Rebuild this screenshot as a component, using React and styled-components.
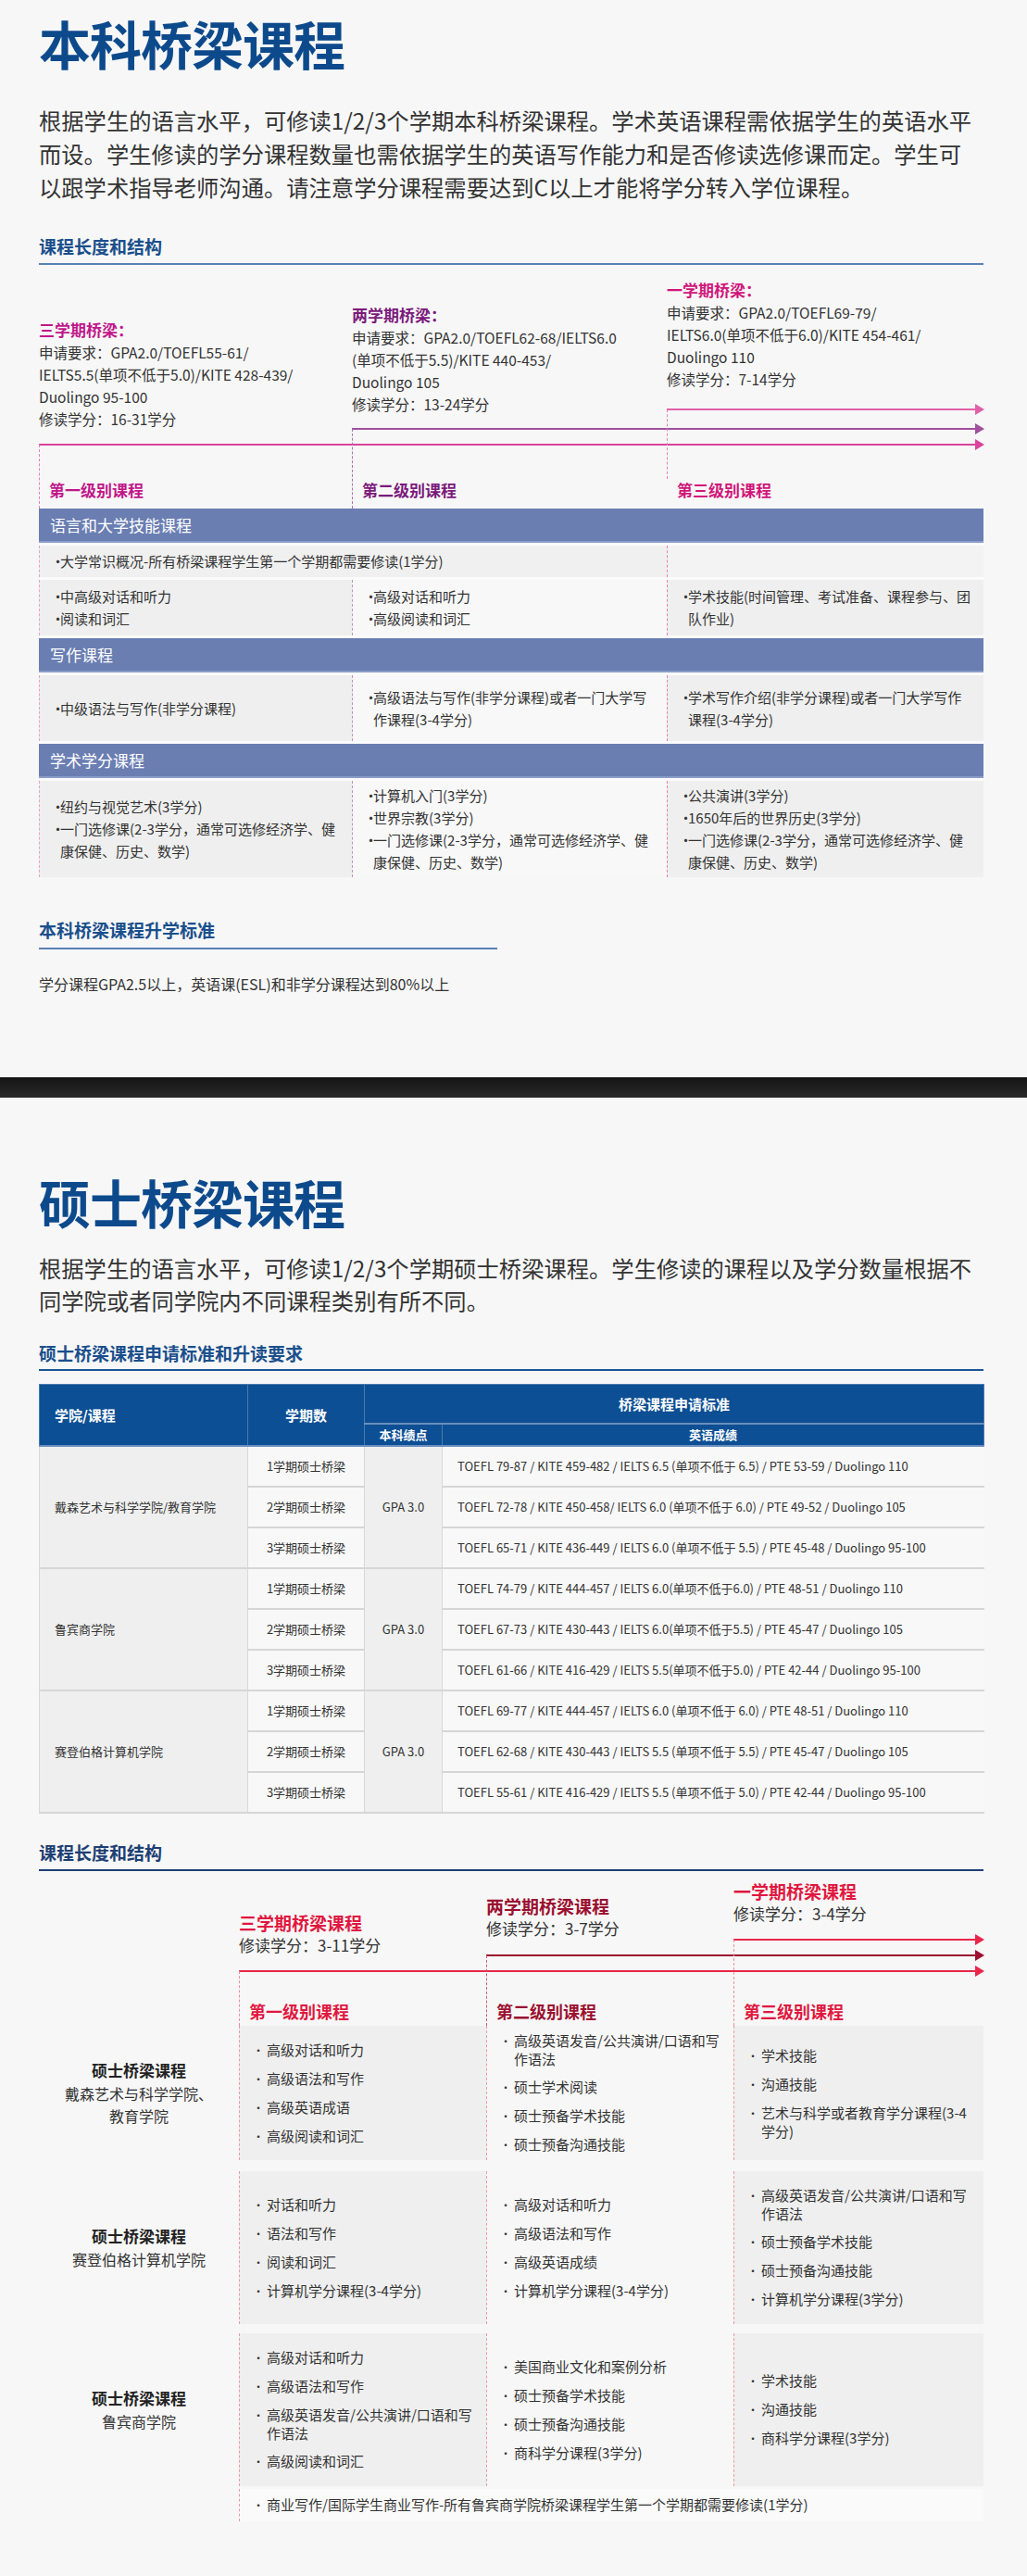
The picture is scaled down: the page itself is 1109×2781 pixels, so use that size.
import React from "react";
import styled, { createGlobalStyle } from "styled-components";

const Global = createGlobalStyle`
  body { margin: 0; background: #f7f7f7; font-family: "Noto Sans CJK SC", "Noto Sans", sans-serif; color: #2b2b2b; }
  * { box-sizing: border-box; }
`;

const Section = styled.section`
  padding: ${p => p.$pt || 0}px 47px 0 42px;
`;
const Title = styled.h1`
  margin: 0; font-size: 56px; line-height: 64px; font-weight: 700; color: #0d4a8c; letter-spacing: -1px;
`;
const Para = styled.p`
  margin: ${p => p.$mt}px 0 0; font-size: 24.3px; line-height: ${p => p.$lh || 36}px; color: #333;
`;
const SubHead = styled.h2`
  margin: ${p => p.$mt}px 0 0; font-size: 19px; line-height: 26px; font-weight: 700; color: ${p => p.$c || "#1a4f8c"};
  padding-bottom: ${p => p.$pb || 6}px; border-bottom: 2px solid ${p => p.$line || "#5b7fb5"};
  width: ${p => p.$w || "100%"};
`;
const DarkBar = styled.div`
  margin-top: 89px; height: 22px; background: linear-gradient(#141414, #2a2a2a);
`;

/* Timeline diagram */
const Timeline = styled.div`position: relative;`;
const StageGrid = styled.div`
  display: grid; grid-template-columns: ${p => p.$cols}; height: ${p => p.$h}px;
`;
const Stage = styled.div`padding-top: ${p => p.$top}px;`;
const StageHead = styled.div`
  font-size: ${p => p.$fs}px; line-height: ${p => p.$lh}px; font-weight: 700; color: ${p => p.$c};
`;
const StageLine = styled.div`font-size: ${p => p.$fs}px; line-height: ${p => p.$lh}px; color: #333;`;
const Arrow = styled.div`
  position: absolute; right: 8px; height: 2px; background: ${p => p.$c};
  &::after { content: ""; position: absolute; right: -9px; top: -5px;
    border-left: 10px solid ${p => p.$c}; border-top: 6px solid transparent; border-bottom: 6px solid transparent; }
`;
const VDash = styled.div`
  position: absolute; bottom: 0; width: 0; border-left: 1px dashed ${p => p.$c};
`;
const LevelRow = styled.div`display: grid; grid-template-columns: ${p => p.$cols}; padding: ${p => p.$pad};`;
const LevelHead = styled.div`
  font-size: ${p => p.$fs}px; line-height: 24px; font-weight: 700; color: ${p => p.$c}; padding-left: 11px;
`;

/* Undergrad grid */
const UGrid = styled.div`
  display: grid; grid-template-columns: 338px 340px 342px; row-gap: 3px; background: #fbfbfb;
`;
const Band = styled.div`
  grid-column: 1 / -1; height: 37px; background: #6a7eb2; color: #fff; font-size: 17px;
  display: flex; align-items: center; padding-left: 12px; border-bottom: 2px solid #8a9cc8;
`;
const UCell = styled.div`
  grid-column: span ${p => p.$span || 1}; min-height: ${p => p.$h}px; background: ${p => p.$bg};
  border-left: 1px dashed ${p => p.$dash || "transparent"};
  display: flex; flex-direction: column; justify-content: center; padding: 4px 12px;
  font-size: 15px; line-height: 24px; color: #333;
`;
const Bul = styled.div`
  padding-left: 10px; text-indent: -10px;
  &::before { content: "•"; display: inline-block; width: 10px; text-indent: 0; }
`;
const Note = styled.p`margin: 25px 0 0; font-size: 16px; line-height: 24px; color: #333;`;

/* Masters table */
const Table = styled.table`
  margin-top: 14px; width: 1020px; border-collapse: collapse; table-layout: fixed; font-size: 13px; color: #333;
`;
const Th = styled.th`
  background: #0d4f94; color: #fff; font-weight: 700; font-size: ${p => p.$fs || 15}px;
  height: ${p => p.$h}px; text-align: ${p => p.$al || "center"}; padding: 0 0 0 ${p => p.$pl || 0}px;
  border: 1px solid #4a7ab0; border-bottom: 2px solid #6b8fbd;
`;
const Td = styled.td`
  height: 44px; background: ${p => p.$bg || "#f8f8f8"}; text-align: ${p => p.$al || "left"};
  padding: 0 ${p => p.$pl || 0}px; border-left: 1px solid #d8d8d8; border-bottom: 2px solid #d6d6d6;
  white-space: nowrap;
`;

/* Masters structure grid */
const MGrid = styled.div`
  display: grid; grid-template-columns: 216px 267px 267px 270px;
`;
const MLabel = styled.div`
  display: flex; flex-direction: column; align-items: center; justify-content: center; text-align: center;
  min-height: ${p => p.$h}px; font-size: 16px; line-height: 24px; color: #333; padding: 0 8px;
  margin-bottom: ${p => p.$mb}px;
`;
const MName = styled.div`font-weight: 700; font-size: 17px; line-height: 26px; color: #222;`;
const MCell = styled.div`
  grid-column: span ${p => p.$span || 1}; min-height: ${p => p.$h}px; margin-bottom: ${p => p.$mb}px;
  background: ${p => p.$bg}; border-left: 1px dashed #e89aa5;
  display: flex; flex-direction: column; justify-content: center; gap: 11px; padding: 6px 14px 6px 14px;
  font-size: 15px; line-height: 19px; color: #333;
`;
const MBul = styled.div`
  padding-left: 15px; text-indent: -15px;
  &::before { content: "•"; display: inline-block; width: 15px; text-indent: 0; font-size: 12px; }
`;
const Bottom = styled.div`height: 60px;`;

const ug = [
  { t: "三学期桥梁：", c: "#c0168a", top: 58, lines: ["申请要求：GPA2.0/TOEFL55-61/", "IELTS5.5(单项不低于5.0)/KITE 428-439/", "Duolingo 95-100", "修读学分：16-31学分"] },
  { t: "两学期桥梁：", c: "#7b1a7b", top: 42, lines: ["申请要求：GPA2.0/TOEFL62-68/IELTS6.0", "(单项不低于5.5)/KITE 440-453/", "Duolingo 105", "修读学分：13-24学分"] },
  { t: "一学期桥梁：", c: "#d0157a", top: 15, lines: ["申请要求：GPA2.0/TOEFL69-79/", "IELTS6.0(单项不低于6.0)/KITE 454-461/", "Duolingo 110", "修读学分：7-14学分"] },
];

const tableRows = [
  { school: "戴森艺术与科学学院/教育学院", rows: [
    "TOEFL 79-87 / KITE 459-482 / IELTS 6.5 (单项不低于 6.5) / PTE 53-59 / Duolingo 110",
    "TOEFL 72-78 / KITE 450-458/ IELTS 6.0 (单项不低于 6.0) / PTE 49-52 / Duolingo 105",
    "TOEFL 65-71 / KITE 436-449 / IELTS 6.0 (单项不低于 5.5) / PTE 45-48 / Duolingo 95-100"] },
  { school: "鲁宾商学院", rows: [
    "TOEFL 74-79 / KITE 444-457 / IELTS 6.0(单项不低于6.0) / PTE 48-51 / Duolingo 110",
    "TOEFL 67-73 / KITE 430-443 / IELTS 6.0(单项不低于5.5) / PTE 45-47 / Duolingo 105",
    "TOEFL 61-66 / KITE 416-429 / IELTS 5.5(单项不低于5.0) / PTE 42-44 / Duolingo 95-100"] },
  { school: "赛登伯格计算机学院", rows: [
    "TOEFL 69-77 / KITE 444-457 / IELTS 6.0 (单项不低于 6.0) / PTE 48-51 / Duolingo 110",
    "TOEFL 62-68 / KITE 430-443 / IELTS 5.5 (单项不低于 5.5) / PTE 45-47 / Duolingo 105",
    "TOEFL 55-61 / KITE 416-429 / IELTS 5.5 (单项不低于 5.0) / PTE 42-44 / Duolingo 95-100"] },
];

const mRows = [
  { name: "硕士桥梁课程", sub: ["戴森艺术与科学学院、", "教育学院"], h: 145, mb: 12, cols: [
    ["高级对话和听力", "高级语法和写作", "高级英语成语", "高级阅读和词汇"],
    ["高级英语发音/公共演讲/口语和写作语法", "硕士学术阅读", "硕士预备学术技能", "硕士预备沟通技能"],
    ["学术技能", "沟通技能", "艺术与科学或者教育学分课程(3-4学分)"]] },
  { name: "硕士桥梁课程", sub: ["赛登伯格计算机学院"], h: 165, mb: 10, cols: [
    ["对话和听力", "语法和写作", "阅读和词汇", "计算机学分课程(3-4学分)"],
    ["高级对话和听力", "高级语法和写作", "高级英语成绩", "计算机学分课程(3-4学分)"],
    ["高级英语发音/公共演讲/口语和写作语法", "硕士预备学术技能", "硕士预备沟通技能", "计算机学分课程(3学分)"]] },
  { name: "硕士桥梁课程", sub: ["鲁宾商学院"], h: 165, mb: 3, cols: [
    ["高级对话和听力", "高级语法和写作", "高级英语发音/公共演讲/口语和写作语法", "高级阅读和词汇"],
    ["美国商业文化和案例分析", "硕士预备学术技能", "硕士预备沟通技能", "商科学分课程(3学分)"],
    ["学术技能", "沟通技能", "商科学分课程(3学分)"]] },
];

const ms = [
  { t: "三学期桥梁课程", c: "#e0173f", top: 43, sub: "修读学分：3-11学分" },
  { t: "两学期桥梁课程", c: "#9b1030", top: 25, sub: "修读学分：3-7学分" },
  { t: "一学期桥梁课程", c: "#e0173f", top: 9, sub: "修读学分：3-4学分" },
];

export default function App() {
  const ucols = "338px 340px 342px";
  const mcols = "216px 267px 267px 270px";
  return (
    <>
      <Global />
      <Section $pt={14}>
        <Title>本科桥梁课程</Title>
        <Para $mt={34}>根据学生的语言水平，可修读1/2/3个学期本科桥梁课程。学术英语课程需依据学生的英语水平而设。学生修读的学分课程数量也需依据学生的英语写作能力和是否修读选修课而定。学生可以跟学术指导老师沟通。请注意学分课程需要达到C以上才能将学分转入学位课程。</Para>
        <SubHead $mt={33} $pb={5}>课程长度和结构</SubHead>
        <Timeline>
          <StageGrid $cols={ucols} $h={213}>
            {ug.map(s => (
              <Stage key={s.t} $top={s.top}>
                <StageHead $fs={17} $lh={24} $c={s.c}>{s.t}</StageHead>
                {s.lines.map(l => <StageLine key={l} $fs={15.5} $lh={24}>{l}</StageLine>)}
              </Stage>
            ))}
          </StageGrid>
          <LevelRow $cols={ucols} $pad="18px 0 8px">
            <LevelHead $fs={17} $c="#c0168a">第一级别课程</LevelHead>
            <LevelHead $fs={17} $c="#7b1a7b">第二级别课程</LevelHead>
            <LevelHead $fs={17} $c="#d0157a">第三级别课程</LevelHead>
          </LevelRow>
          <Arrow $c="#e060a8" style={{ left: 678, top: 155 }} />
          <Arrow $c="#a0509e" style={{ left: 338, top: 176 }} />
          <Arrow $c="#d8449c" style={{ left: 0, top: 193 }} />
          <VDash $c="#e080b8" style={{ left: 678, top: 156, bottom: 32 }} />
          <VDash $c="#b070b0" style={{ left: 338, top: 177 }} />
          <VDash $c="#e080b8" style={{ left: 0, top: 194 }} />
        </Timeline>
        <UGrid>
          <Band>语言和大学技能课程</Band>
          <UCell $span={2} $h={34} $bg="#f0f0f0" $dash="#e8a0c8"><Bul>大学常识概况-所有桥梁课程学生第一个学期都需要修读(1学分)</Bul></UCell>
          <UCell $h={34} $bg="#f3f3f3" $dash="#e080b8" />
          <UCell $h={60} $bg="#efefef" $dash="#e8a0c8"><Bul>中高级对话和听力</Bul><Bul>阅读和词汇</Bul></UCell>
          <UCell $h={60} $bg="#f8f8f8" $dash="#c090c0"><Bul>高级对话和听力</Bul><Bul>高级阅读和词汇</Bul></UCell>
          <UCell $h={60} $bg="#efefef" $dash="#e080b8"><Bul>学术技能(时间管理、考试准备、课程参与、团队作业)</Bul></UCell>
          <Band>写作课程</Band>
          <UCell $h={71} $bg="#efefef" $dash="#e8a0c8"><Bul>中级语法与写作(非学分课程)</Bul></UCell>
          <UCell $h={71} $bg="#f8f8f8" $dash="#c090c0"><Bul>高级语法与写作(非学分课程)或者一门大学写作课程(3-4学分)</Bul></UCell>
          <UCell $h={71} $bg="#efefef" $dash="#e080b8"><Bul>学术写作介绍(非学分课程)或者一门大学写作课程(3-4学分)</Bul></UCell>
          <Band>学术学分课程</Band>
          <UCell $h={103} $bg="#efefef" $dash="#e8a0c8"><Bul>纽约与视觉艺术(3学分)</Bul><Bul>一门选修课(2-3学分，通常可选修经济学、健康保健、历史、数学)</Bul></UCell>
          <UCell $h={103} $bg="#f8f8f8" $dash="#c090c0"><Bul>计算机入门(3学分)</Bul><Bul>世界宗教(3学分)</Bul><Bul>一门选修课(2-3学分，通常可选修经济学、健康保健、历史、数学)</Bul></UCell>
          <UCell $h={103} $bg="#efefef" $dash="#e080b8"><Bul>公共演讲(3学分)</Bul><Bul>1650年后的世界历史(3学分)</Bul><Bul>一门选修课(2-3学分，通常可选修经济学、健康保健、历史、数学)</Bul></UCell>
        </UGrid>
        <SubHead $mt={44} $w="495px">本科桥梁课程升学标准</SubHead>
        <Note>学分课程GPA2.5以上，英语课(ESL)和非学分课程达到80%以上</Note>
      </Section>
      <DarkBar />
      <Section $pt={80}>
        <Title>硕士桥梁课程</Title>
        <Para $mt={22} $lh={35}>根据学生的语言水平，可修读1/2/3个学期硕士桥梁课程。学生修读的课程以及学分数量根据不同学院或者同学院内不同课程类别有所不同。</Para>
        <SubHead $mt={27} $pb={4} $line="#1a5596">硕士桥梁课程申请标准和升读要求</SubHead>
        <Table>
          <colgroup><col style={{ width: 225 }} /><col style={{ width: 126 }} /><col style={{ width: 84 }} /><col style={{ width: 585 }} /></colgroup>
          <thead>
            <tr>
              <Th rowSpan={2} $h={42} $al="left" $pl={16}>学院/课程</Th>
              <Th rowSpan={2} $h={42}>学期数</Th>
              <Th colSpan={2} $h={42}>桥梁课程申请标准</Th>
            </tr>
            <tr>
              <Th $h={24} $fs={13}>本科绩点</Th>
              <Th $h={24} $fs={13}>英语成绩</Th>
            </tr>
          </thead>
          <tbody>
            {tableRows.map(g => g.rows.map((r, i) => (
              <tr key={r}>
                {i === 0 && <Td rowSpan={3} $bg="#efefef" $pl={16}>{g.school}</Td>}
                <Td $al="center">{i + 1}学期硕士桥梁</Td>
                {i === 0 && <Td rowSpan={3} $bg="#efefef" $al="center">GPA 3.0</Td>}
                <Td $pl={16}>{r}</Td>
              </tr>
            )))}
          </tbody>
        </Table>
        <SubHead $mt={29} $pb={5} $c="#1d3f73" $line="#1d3f73">课程长度和结构</SubHead>
        <Timeline>
          <StageGrid $cols={mcols} $h={127}>
            <div />
            {ms.map(s => (
              <Stage key={s.t} $top={s.top}>
                <StageHead $fs={19} $lh={26} $c={s.c}>{s.t}</StageHead>
                <StageLine $fs={17} $lh={22}>{s.sub}</StageLine>
              </Stage>
            ))}
          </StageGrid>
          <LevelRow $cols={mcols} $pad="12px 0 4px">
            <div />
            <LevelHead $fs={18} $c="#e0173f">第一级别课程</LevelHead>
            <LevelHead $fs={18} $c="#9b1030">第二级别课程</LevelHead>
            <LevelHead $fs={18} $c="#e0173f">第三级别课程</LevelHead>
          </LevelRow>
          <Arrow $c="#e8274a" style={{ left: 750, top: 73 }} />
          <Arrow $c="#9b1030" style={{ left: 483, top: 90 }} />
          <Arrow $c="#e8274a" style={{ left: 216, top: 107 }} />
          <VDash $c="#e8909a" style={{ left: 750, top: 74 }} />
          <VDash $c="#c06070" style={{ left: 483, top: 91 }} />
          <VDash $c="#e8909a" style={{ left: 216, top: 108 }} />
        </Timeline>
        <MGrid>
          {mRows.map((r, ri) => (
            <React.Fragment key={ri}>
              <MLabel $h={r.h} $mb={r.mb}>
                <MName>{r.name}</MName>
                {r.sub.map(s => <div key={s}>{s}</div>)}
              </MLabel>
              {r.cols.map((c, ci) => (
                <MCell key={ci} $h={r.h} $mb={r.mb} $bg={ci === 1 ? "#f7f7f7" : "#efefef"}>
                  {c.map(t => <MBul key={t}>{t}</MBul>)}
                </MCell>
              ))}
            </React.Fragment>
          ))}
          <MLabel $h={35} $mb={0} />
          <MCell $span={3} $h={35} $mb={0} $bg="#fafafa">
            <MBul>商业写作/国际学生商业写作-所有鲁宾商学院桥梁课程学生第一个学期都需要修读(1学分)</MBul>
          </MCell>
        </MGrid>
        <Bottom />
      </Section>
    </>
  );
}
